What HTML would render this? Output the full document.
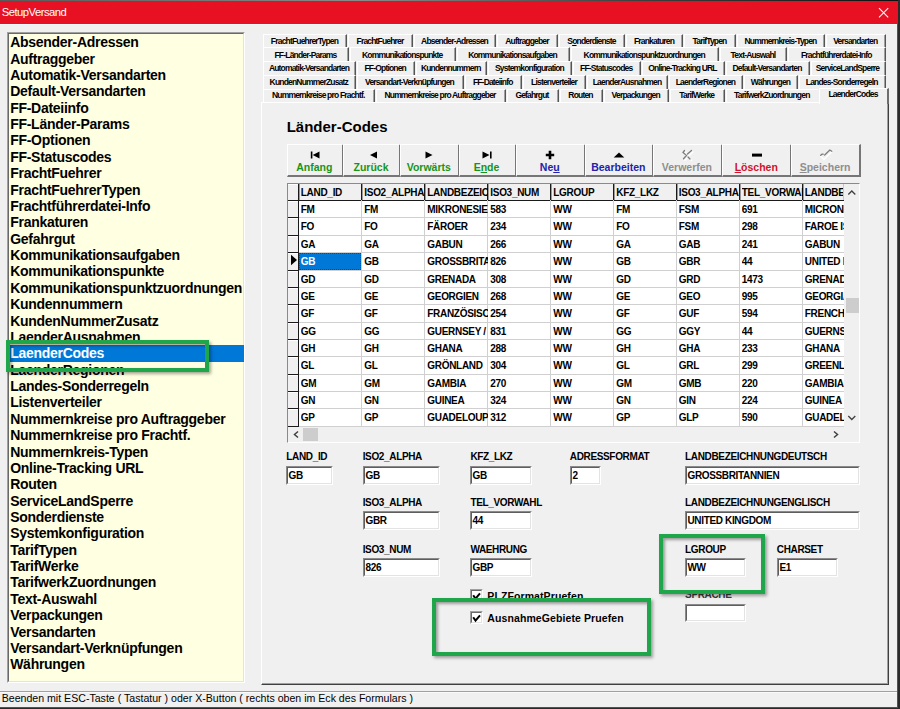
<!DOCTYPE html>
<html><head><meta charset="utf-8"><style>
html,body{margin:0;padding:0;width:900px;height:709px;overflow:hidden;background:#2a2a2a;font-family:"Liberation Sans", sans-serif}
.b{position:absolute}
.t{position:absolute;white-space:nowrap;line-height:1;font-family:"Liberation Sans", sans-serif}
.t.c{text-align:center}
.tab{position:absolute;box-sizing:border-box;background:#F0F0F0;border-top:1px solid #fff;border-left:1px solid #fff;border-right:1px solid #555;box-shadow:inset -1px 0 0 #A0A0A0;overflow:hidden}
.tab span{position:absolute;left:-1px;right:0;top:1.6px;text-align:center;font-size:8.5px;font-weight:bold;line-height:9px;letter-spacing:-0.82px;white-space:nowrap;color:#000}
.tab.act{border-right:2px solid #6E6E6E;box-shadow:none;z-index:2}
.tab.act span{top:1.5px}
.btn{position:absolute;box-sizing:border-box;background:#F0F0F0;border-top:1px solid #fff;border-left:1px solid #fff;border-right:2px solid #767676;border-bottom:2px solid #767676}
u{text-decoration:underline;text-underline-offset:1px}
</style></head><body>
<div class="b" style="left:0;top:0;width:900px;height:1px;background:linear-gradient(90deg,#5a5a5a,#8a8a8a 40%,#404040 70%,#101010)"></div>
<div class="b" style="left:0.00px;top:1.00px;width:898.00px;height:23.00px;background:#E81123"></div>
<div class="t " style="left:1.80px;top:6.63px;font-size:11.3px;font-weight:normal;color:#fff;letter-spacing:-0.55px;">SetupVersand</div>
<svg class="b" style="left:878px;top:7px" width="12" height="12" viewBox="0 0 12 12"><path d="M1 1.2L10.2 10.4M10.2 1.2L1 10.4" stroke="#fff" stroke-width="1.05"/></svg>
<div class="b" style="left:0.00px;top:24.00px;width:897.00px;height:683.00px;background:#F0F0F0"></div>
<div class="b" style="left:0.00px;top:24.00px;width:897.00px;height:1.00px;background:#F8FBFB"></div>
<div class="b" style="left:897.00px;top:1.00px;width:1.00px;height:707.00px;background:#E81123"></div>
<div class="b" style="left:0.00px;top:707.00px;width:898.00px;height:1.00px;background:#E81123"></div>
<div class="b" style="left:898.00px;top:0.00px;width:2.00px;height:709.00px;background:#2a2a2a"></div>
<div class="b" style="left:0.00px;top:708.00px;width:900.00px;height:1.00px;background:#2a2a2a"></div>
<div class="b" style="left:6.50px;top:32.00px;width:238.50px;height:651.00px;background:#FFFFE1;border-top:1px solid #A0A0A0;border-left:1px solid #A0A0A0;border-right:1px solid #fff;border-bottom:1px solid #fff;box-sizing:border-box"></div>
<div class="b" style="left:7.50px;top:33.00px;width:236.50px;height:649.00px;border-top:1px solid #696969;border-left:1px solid #696969;border-right:1px solid #E3E3E3;border-bottom:1px solid #E3E3E3;box-sizing:border-box"></div>
<div class="t " style="left:10.20px;top:35.25px;font-size:14px;font-weight:bold;color:#000;letter-spacing:-0.28px;">Absender-Adressen</div>
<div class="t " style="left:10.20px;top:51.62px;font-size:14px;font-weight:bold;color:#000;letter-spacing:-0.28px;">Auftraggeber</div>
<div class="t " style="left:10.20px;top:67.99px;font-size:14px;font-weight:bold;color:#000;letter-spacing:-0.28px;">Automatik-Versandarten</div>
<div class="t " style="left:10.20px;top:84.36px;font-size:14px;font-weight:bold;color:#000;letter-spacing:-0.28px;">Default-Versandarten</div>
<div class="t " style="left:10.20px;top:100.73px;font-size:14px;font-weight:bold;color:#000;letter-spacing:-0.28px;">FF-Dateiinfo</div>
<div class="t " style="left:10.20px;top:117.10px;font-size:14px;font-weight:bold;color:#000;letter-spacing:-0.28px;">FF-Länder-Params</div>
<div class="t " style="left:10.20px;top:133.47px;font-size:14px;font-weight:bold;color:#000;letter-spacing:-0.28px;">FF-Optionen</div>
<div class="t " style="left:10.20px;top:149.84px;font-size:14px;font-weight:bold;color:#000;letter-spacing:-0.28px;">FF-Statuscodes</div>
<div class="t " style="left:10.20px;top:166.21px;font-size:14px;font-weight:bold;color:#000;letter-spacing:-0.28px;">FrachtFuehrer</div>
<div class="t " style="left:10.20px;top:182.58px;font-size:14px;font-weight:bold;color:#000;letter-spacing:-0.28px;">FrachtFuehrerTypen</div>
<div class="t " style="left:10.20px;top:198.95px;font-size:14px;font-weight:bold;color:#000;letter-spacing:-0.28px;">Frachtführerdatei-Info</div>
<div class="t " style="left:10.20px;top:215.32px;font-size:14px;font-weight:bold;color:#000;letter-spacing:-0.28px;">Frankaturen</div>
<div class="t " style="left:10.20px;top:231.69px;font-size:14px;font-weight:bold;color:#000;letter-spacing:-0.28px;">Gefahrgut</div>
<div class="t " style="left:10.20px;top:248.06px;font-size:14px;font-weight:bold;color:#000;letter-spacing:-0.28px;">Kommunikationsaufgaben</div>
<div class="t " style="left:10.20px;top:264.43px;font-size:14px;font-weight:bold;color:#000;letter-spacing:-0.28px;">Kommunikationspunkte</div>
<div class="t " style="left:10.20px;top:280.80px;font-size:14px;font-weight:bold;color:#000;letter-spacing:-0.28px;">Kommunikationspunktzuordnungen</div>
<div class="t " style="left:10.20px;top:297.17px;font-size:14px;font-weight:bold;color:#000;letter-spacing:-0.28px;">Kundennummern</div>
<div class="t " style="left:10.20px;top:313.54px;font-size:14px;font-weight:bold;color:#000;letter-spacing:-0.28px;">KundenNummerZusatz</div>
<div class="t " style="left:10.20px;top:329.91px;font-size:14px;font-weight:bold;color:#000;letter-spacing:-0.28px;">LaenderAusnahmen</div>
<div class="b" style="left:10.00px;top:345.33px;width:233.50px;height:16.40px;background:#0078D7"></div>
<div class="t " style="left:10.20px;top:346.28px;font-size:14px;font-weight:bold;color:#fff;letter-spacing:-0.28px;">LaenderCodes</div>
<div class="t " style="left:10.20px;top:362.65px;font-size:14px;font-weight:bold;color:#000;letter-spacing:-0.28px;">LaenderRegionen</div>
<div class="t " style="left:10.20px;top:379.02px;font-size:14px;font-weight:bold;color:#000;letter-spacing:-0.28px;">Landes-Sonderregeln</div>
<div class="t " style="left:10.20px;top:395.39px;font-size:14px;font-weight:bold;color:#000;letter-spacing:-0.28px;">Listenverteiler</div>
<div class="t " style="left:10.20px;top:411.76px;font-size:14px;font-weight:bold;color:#000;letter-spacing:-0.28px;">Nummernkreise pro Auftraggeber</div>
<div class="t " style="left:10.20px;top:428.13px;font-size:14px;font-weight:bold;color:#000;letter-spacing:-0.28px;">Nummernkreise pro Frachtf.</div>
<div class="t " style="left:10.20px;top:444.50px;font-size:14px;font-weight:bold;color:#000;letter-spacing:-0.28px;">Nummernkreis-Typen</div>
<div class="t " style="left:10.20px;top:460.87px;font-size:14px;font-weight:bold;color:#000;letter-spacing:-0.28px;">Online-Tracking URL</div>
<div class="t " style="left:10.20px;top:477.24px;font-size:14px;font-weight:bold;color:#000;letter-spacing:-0.28px;">Routen</div>
<div class="t " style="left:10.20px;top:493.61px;font-size:14px;font-weight:bold;color:#000;letter-spacing:-0.28px;">ServiceLandSperre</div>
<div class="t " style="left:10.20px;top:509.98px;font-size:14px;font-weight:bold;color:#000;letter-spacing:-0.28px;">Sonderdienste</div>
<div class="t " style="left:10.20px;top:526.35px;font-size:14px;font-weight:bold;color:#000;letter-spacing:-0.28px;">Systemkonfiguration</div>
<div class="t " style="left:10.20px;top:542.72px;font-size:14px;font-weight:bold;color:#000;letter-spacing:-0.28px;">TarifTypen</div>
<div class="t " style="left:10.20px;top:559.09px;font-size:14px;font-weight:bold;color:#000;letter-spacing:-0.28px;">TarifWerke</div>
<div class="t " style="left:10.20px;top:575.46px;font-size:14px;font-weight:bold;color:#000;letter-spacing:-0.28px;">TarifwerkZuordnungen</div>
<div class="t " style="left:10.20px;top:591.83px;font-size:14px;font-weight:bold;color:#000;letter-spacing:-0.28px;">Text-Auswahl</div>
<div class="t " style="left:10.20px;top:608.20px;font-size:14px;font-weight:bold;color:#000;letter-spacing:-0.28px;">Verpackungen</div>
<div class="t " style="left:10.20px;top:624.57px;font-size:14px;font-weight:bold;color:#000;letter-spacing:-0.28px;">Versandarten</div>
<div class="t " style="left:10.20px;top:640.94px;font-size:14px;font-weight:bold;color:#000;letter-spacing:-0.28px;">Versandart-Verknüpfungen</div>
<div class="t " style="left:10.20px;top:657.31px;font-size:14px;font-weight:bold;color:#000;letter-spacing:-0.28px;">Währungen</div>
<div class="b" style="left:261.00px;top:102.00px;width:628.00px;height:582.50px;border-left:1px solid #fff;border-top:1px solid #fff;border-right:1px solid #404040;border-bottom:1px solid #404040;box-sizing:border-box;box-shadow:inset -1px -1px 0 #A0A0A0"></div>
<div class="tab" style="left:263.00px;top:34.00px;width:84.00px;height:13.50px"><span style="top:2.3px">FrachtFuehrerTypen</span></div>
<div class="tab" style="left:348.00px;top:34.00px;width:65.00px;height:13.50px"><span style="top:2.3px">FrachtFuehrer</span></div>
<div class="tab" style="left:414.00px;top:34.00px;width:82.00px;height:13.50px"><span style="top:2.3px">Absender-Adressen</span></div>
<div class="tab" style="left:497.00px;top:34.00px;width:61.00px;height:13.50px"><span style="top:2.3px">Auftraggeber</span></div>
<div class="tab" style="left:559.00px;top:34.00px;width:66.00px;height:13.50px"><span style="top:2.3px">S<u>o</u>nderdienste</span></div>
<div class="tab" style="left:626.00px;top:34.00px;width:57.00px;height:13.50px"><span style="top:2.3px">Frankaturen</span></div>
<div class="tab" style="left:684.00px;top:34.00px;width:52.00px;height:13.50px"><span style="top:2.3px">TarifTypen</span></div>
<div class="tab" style="left:737.00px;top:34.00px;width:88.00px;height:13.50px"><span style="top:2.3px">Nummernkreis-Typen</span></div>
<div class="tab" style="left:826.00px;top:34.00px;width:59.50px;height:13.50px"><span style="top:2.3px">Versandarten</span></div>
<div class="tab" style="left:263.00px;top:47.00px;width:86.00px;height:14.50px"><span style="top:3.2px">FF-Länder-Params</span></div>
<div class="tab" style="left:350.00px;top:47.00px;width:105.50px;height:14.50px"><span style="top:3.2px">Kommunikationspunkte</span></div>
<div class="tab" style="left:456.50px;top:47.00px;width:113.00px;height:14.50px"><span style="top:3.2px">Kommunikationsaufgaben</span></div>
<div class="tab" style="left:570.50px;top:47.00px;width:148.50px;height:14.50px"><span style="top:3.2px">Kommunikationspunktzuordnungen</span></div>
<div class="tab" style="left:720.00px;top:47.00px;width:67.00px;height:14.50px"><span style="top:3.2px">Text-Auswahl</span></div>
<div class="tab" style="left:788.00px;top:47.00px;width:97.50px;height:14.50px"><span style="top:3.2px">Frachtführerdatei-Info</span></div>
<div class="tab" style="left:263.00px;top:61.40px;width:93.00px;height:13.90px"><span style="top:1.6px">Automatik-Versandarten</span></div>
<div class="tab" style="left:357.00px;top:61.40px;width:57.50px;height:13.90px"><span style="top:1.6px">FF-Optionen</span></div>
<div class="tab" style="left:415.50px;top:61.40px;width:71.50px;height:13.90px"><span style="top:1.6px">Kundennummern</span></div>
<div class="tab" style="left:488.00px;top:61.40px;width:84.00px;height:13.90px"><span style="top:1.6px">Systemkonfiguration</span></div>
<div class="tab" style="left:573.00px;top:61.40px;width:67.50px;height:13.90px"><span style="top:1.6px">FF-Statuscodes</span></div>
<div class="tab" style="left:641.50px;top:61.40px;width:83.00px;height:13.90px"><span style="top:1.6px">Online-Tracking URL</span></div>
<div class="tab" style="left:725.50px;top:61.40px;width:84.00px;height:13.90px"><span style="top:1.6px">Default-Versandarten</span></div>
<div class="tab" style="left:810.50px;top:61.40px;width:75.00px;height:13.90px"><span style="top:1.6px">ServiceLandSperre</span></div>
<div class="tab" style="left:263.00px;top:75.20px;width:92.50px;height:13.90px"><span style="top:1.6px">KundenNummerZusatz</span></div>
<div class="tab" style="left:356.50px;top:75.20px;width:107.00px;height:13.90px"><span style="top:1.6px">Versandart-Verknüpfungen</span></div>
<div class="tab" style="left:464.50px;top:75.20px;width:57.50px;height:13.90px"><span style="top:1.6px">FF-Dateiinfo</span></div>
<div class="tab" style="left:523.00px;top:75.20px;width:63.00px;height:13.90px"><span style="top:1.6px">Listenverteiler</span></div>
<div class="tab" style="left:587.00px;top:75.20px;width:81.00px;height:13.90px"><span style="top:1.6px">LaenderAusnahmen</span></div>
<div class="tab" style="left:669.00px;top:75.20px;width:74.00px;height:13.90px"><span style="top:1.6px">LaenderRegionen</span></div>
<div class="tab" style="left:744.00px;top:75.20px;width:54.00px;height:13.90px"><span style="top:1.6px">Währungen</span></div>
<div class="tab" style="left:799.00px;top:75.20px;width:86.50px;height:13.90px"><span style="top:1.6px">Landes-Sonderregeln</span></div>
<div class="tab" style="left:263.00px;top:88.90px;width:111.50px;height:13.60px"><span style="top:1.6px">Nummernkreise pro Frachtf.</span></div>
<div class="tab" style="left:375.50px;top:88.90px;width:130.00px;height:13.60px"><span style="top:1.6px">Nummernkreise pro Auftraggeber</span></div>
<div class="tab" style="left:506.50px;top:88.90px;width:52.00px;height:13.60px"><span style="top:1.6px">Gefahrgut</span></div>
<div class="tab" style="left:559.50px;top:88.90px;width:43.00px;height:13.60px"><span style="top:1.6px">Routen</span></div>
<div class="tab" style="left:603.50px;top:88.90px;width:65.50px;height:13.60px"><span style="top:1.6px">Verpackungen</span></div>
<div class="tab" style="left:670.00px;top:88.90px;width:54.50px;height:13.60px"><span style="top:1.6px">TarifWerke</span></div>
<div class="tab" style="left:725.50px;top:88.90px;width:92.50px;height:13.60px;border-right:none;box-shadow:none"><span style="top:1.6px">TarifwerkZuordnungen</span></div>
<div class="tab act" style="left:819px;top:87.6px;width:70px;height:16px"><span>LaenderCodes</span></div>
<div class="t " style="left:286.70px;top:118.60px;font-size:15px;font-weight:bold;color:#000;letter-spacing:0px;">Länder-Codes</div>
<div class="btn" style="left:286.50px;top:144px;width:57.50px;height:32.5px"></div>
<svg class="b" style="left:306.75px;top:146.5px" width="16" height="16" viewBox="-8 -8 16 16"><path d="M-4.2 -3.5h1.6v7h-1.6z M4.5 -3.6 L-2.3 0 L4.5 3.6z" fill="#000"/></svg>
<div class="t c" style="left:286.00px;width:56.50px;top:162px;font-size:10.5px;font-weight:bold;color:#189418">Anfang</div>
<div class="btn" style="left:343.00px;top:144px;width:58.00px;height:32.5px"></div>
<svg class="b" style="left:363.50px;top:146.5px" width="16" height="16" viewBox="-8 -8 16 16"><path d="M5 -3.6 L-2 0 L5 3.6z" fill="#000"/></svg>
<div class="t c" style="left:342.50px;width:57.00px;top:162px;font-size:10.5px;font-weight:bold;color:#189418">Zurück</div>
<div class="btn" style="left:400.00px;top:144px;width:59.50px;height:32.5px"></div>
<svg class="b" style="left:421.25px;top:146.5px" width="16" height="16" viewBox="-8 -8 16 16"><path d="M-3.5 -3.6 L3.5 0 L-3.5 3.6z" fill="#000"/></svg>
<div class="t c" style="left:399.50px;width:58.50px;top:162px;font-size:10.5px;font-weight:bold;color:#189418">Vorwärts</div>
<div class="btn" style="left:458.50px;top:144px;width:58.00px;height:32.5px"></div>
<svg class="b" style="left:479.00px;top:146.5px" width="16" height="16" viewBox="-8 -8 16 16"><path d="M3 -3.5h1.6v7h-1.6z M-4.5 -3.6 L2.5 0 L-4.5 3.6z" fill="#000"/></svg>
<div class="t c" style="left:458.00px;width:57.00px;top:162px;font-size:10.5px;font-weight:bold;color:#189418">E<u>n</u>de</div>
<div class="btn" style="left:515.50px;top:144px;width:70.50px;height:32.5px"></div>
<svg class="b" style="left:542.25px;top:146.5px" width="16" height="16" viewBox="-8 -8 16 16"><path d="M-1.3 -4.2h2.6v2.9h2.9v2.6h-2.9v2.9h-2.6v-2.9h-2.9v-2.6h2.9z" fill="#000"/></svg>
<div class="t c" style="left:515.00px;width:69.50px;top:162px;font-size:10.5px;font-weight:bold;color:#2222AA">Ne<u>u</u></div>
<div class="btn" style="left:585.00px;top:144px;width:68.60px;height:32.5px"></div>
<svg class="b" style="left:610.80px;top:146.5px" width="16" height="16" viewBox="-8 -8 16 16"><path d="M-5.3 2.6 L0 -2.6 L5.3 2.6z" fill="#000"/></svg>
<div class="t c" style="left:584.50px;width:67.60px;top:162px;font-size:10.5px;font-weight:bold;color:#2222AA">Bearbeiten</div>
<div class="btn" style="left:652.60px;top:144px;width:70.70px;height:32.5px"></div>
<svg class="b" style="left:679.45px;top:146.5px" width="16" height="16" viewBox="-8 -8 16 16"><g fill="none" stroke-width="1.3" stroke-linecap="round"><path d="M-2 -4 L-3.5 -2 L0 1 L-3 4.3 M5 -4 L1 -0.5 M1.5 2.5 L3.5 4.5" stroke="#fff" transform="translate(1,1)"/><path d="M-2.5 -4.5 L-4 -2.5 L-0.5 0.5 L-3.5 3.8 M4.5 -4.5 L0.5 -1 M1 2 L3 4" stroke="#7C7C7C"/></g></svg>
<div class="t c" style="left:652.10px;width:69.70px;top:162px;font-size:10.5px;font-weight:bold;color:#8E8E8E">Verwerfen</div>
<div class="btn" style="left:722.30px;top:144px;width:69.90px;height:32.5px"></div>
<svg class="b" style="left:748.75px;top:146.5px" width="16" height="16" viewBox="-8 -8 16 16"><path d="M-5 -1.4h10v3h-10z" fill="#000"/></svg>
<div class="t c" style="left:721.80px;width:68.90px;top:162px;font-size:10.5px;font-weight:bold;color:#D0122A"><u>L</u>öschen</div>
<div class="btn" style="left:791.20px;top:144px;width:69.80px;height:32.5px"></div>
<svg class="b" style="left:817.60px;top:146.5px" width="16" height="16" viewBox="-8 -8 16 16"><g fill="none" stroke-width="1.3" stroke-linecap="round"><path d="M-5 1.5 L-2 4.5 L5.5 -3" stroke="#fff"/><path d="M-5.3 0.3 L-4 -0.8 L-2.8 -0.8 M-1.3 0 L3.8 -5 L5.8 -3.8" stroke="#7C7C7C"/></g></svg>
<div class="t c" style="left:790.70px;width:68.80px;top:162px;font-size:10.5px;font-weight:bold;color:#8E8E8E"><u>S</u>peichern</div>
<div class="b" style="left:286.50px;top:182.60px;width:573.50px;height:260.40px;background:#F0F0F0;border-top:1px solid #8A8A8A;border-left:1px solid #8A8A8A;border-right:1px solid #fff;border-bottom:1px solid #fff;box-sizing:border-box"></div>
<div class="b" style="left:287.50px;top:183.60px;width:571.50px;height:258.40px;border-top:1px solid #505050;border-left:1px solid #505050;box-sizing:border-box"></div>
<div class="b" style="left:288px;top:184px;width:555.50px;height:243px;overflow:hidden;background:#fff">
<div class="b" style="left:0;top:0;width:600px;height:16px;background:#F0F0F0"></div>
<div class="b" style="left:0;top:0px;width:10px;height:16px;background:#F0F0F0;border-top:1px solid #fff;box-sizing:border-box"></div>
<div class="b" style="left:0;top:16px;width:10px;height:1px;background:#1a1a1a"></div>
<div class="b" style="left:0;top:17px;width:10px;height:1px;background:#8a8a8a"></div>
<div class="b" style="left:0;top:17px;width:10px;height:16px;background:#F0F0F0;border-top:1px solid #fff;box-sizing:border-box"></div>
<div class="b" style="left:0;top:33px;width:10px;height:1px;background:#1a1a1a"></div>
<div class="b" style="left:0;top:34px;width:10px;height:1px;background:#8a8a8a"></div>
<div class="b" style="left:0;top:34px;width:10px;height:17px;background:#F0F0F0;border-top:1px solid #fff;box-sizing:border-box"></div>
<div class="b" style="left:0;top:51px;width:10px;height:1px;background:#1a1a1a"></div>
<div class="b" style="left:0;top:52px;width:10px;height:1px;background:#8a8a8a"></div>
<div class="b" style="left:0;top:52px;width:10px;height:16px;background:#F0F0F0;border-top:1px solid #fff;box-sizing:border-box"></div>
<div class="b" style="left:0;top:68px;width:10px;height:1px;background:#1a1a1a"></div>
<div class="b" style="left:0;top:69px;width:10px;height:1px;background:#8a8a8a"></div>
<div class="b" style="left:0;top:69px;width:10px;height:17px;background:#F0F0F0;border-top:1px solid #fff;box-sizing:border-box"></div>
<div class="b" style="left:0;top:86px;width:10px;height:1px;background:#1a1a1a"></div>
<div class="b" style="left:0;top:87px;width:10px;height:1px;background:#8a8a8a"></div>
<div class="b" style="left:0;top:87px;width:10px;height:16px;background:#F0F0F0;border-top:1px solid #fff;box-sizing:border-box"></div>
<div class="b" style="left:0;top:103px;width:10px;height:1px;background:#1a1a1a"></div>
<div class="b" style="left:0;top:104px;width:10px;height:1px;background:#8a8a8a"></div>
<div class="b" style="left:0;top:104px;width:10px;height:16px;background:#F0F0F0;border-top:1px solid #fff;box-sizing:border-box"></div>
<div class="b" style="left:0;top:120px;width:10px;height:1px;background:#1a1a1a"></div>
<div class="b" style="left:0;top:121px;width:10px;height:1px;background:#8a8a8a"></div>
<div class="b" style="left:0;top:121px;width:10px;height:17px;background:#F0F0F0;border-top:1px solid #fff;box-sizing:border-box"></div>
<div class="b" style="left:0;top:138px;width:10px;height:1px;background:#1a1a1a"></div>
<div class="b" style="left:0;top:139px;width:10px;height:1px;background:#8a8a8a"></div>
<div class="b" style="left:0;top:139px;width:10px;height:16px;background:#F0F0F0;border-top:1px solid #fff;box-sizing:border-box"></div>
<div class="b" style="left:0;top:155px;width:10px;height:1px;background:#1a1a1a"></div>
<div class="b" style="left:0;top:156px;width:10px;height:1px;background:#8a8a8a"></div>
<div class="b" style="left:0;top:156px;width:10px;height:16px;background:#F0F0F0;border-top:1px solid #fff;box-sizing:border-box"></div>
<div class="b" style="left:0;top:172px;width:10px;height:1px;background:#1a1a1a"></div>
<div class="b" style="left:0;top:173px;width:10px;height:1px;background:#8a8a8a"></div>
<div class="b" style="left:0;top:173px;width:10px;height:17px;background:#F0F0F0;border-top:1px solid #fff;box-sizing:border-box"></div>
<div class="b" style="left:0;top:190px;width:10px;height:1px;background:#1a1a1a"></div>
<div class="b" style="left:0;top:191px;width:10px;height:1px;background:#8a8a8a"></div>
<div class="b" style="left:0;top:191px;width:10px;height:16px;background:#F0F0F0;border-top:1px solid #fff;box-sizing:border-box"></div>
<div class="b" style="left:0;top:207px;width:10px;height:1px;background:#1a1a1a"></div>
<div class="b" style="left:0;top:208px;width:10px;height:1px;background:#8a8a8a"></div>
<div class="b" style="left:0;top:208px;width:10px;height:16px;background:#F0F0F0;border-top:1px solid #fff;box-sizing:border-box"></div>
<div class="b" style="left:0;top:224px;width:10px;height:1px;background:#1a1a1a"></div>
<div class="b" style="left:0;top:225px;width:10px;height:1px;background:#8a8a8a"></div>
<div class="b" style="left:0;top:225px;width:10px;height:17px;background:#F0F0F0;border-top:1px solid #fff;box-sizing:border-box"></div>
<div class="b" style="left:0;top:242px;width:10px;height:1px;background:#1a1a1a"></div>
<div class="b" style="left:0;top:243px;width:10px;height:1px;background:#8a8a8a"></div>
<svg class="b" style="left:1px;top:70px" width="10" height="12" viewBox="0 0 10 12"><path d="M2 0.8 L8 6 L2 11.2z" fill="#000"/></svg>
<div class="b" style="left:10px;top:16px;width:600px;height:1px;background:#1a1a1a"></div>
<div class="b" style="left:10px;top:0;width:1px;height:16px;background:#1a1a1a"></div>
<div class="b" style="left:11px;top:0;width:1px;height:16px;background:#9a9a9a"></div>
<div class="b" style="left:10px;top:16px;width:1px;height:300px;background:#1a1a1a"></div>
<div class="b" style="left:73px;top:0;width:1px;height:16px;background:#1a1a1a"></div>
<div class="b" style="left:74px;top:0;width:1px;height:16px;background:#9a9a9a"></div>
<div class="b" style="left:73px;top:16px;width:1px;height:300px;background:#D0D0D0"></div>
<div class="b" style="left:136px;top:0;width:1px;height:16px;background:#1a1a1a"></div>
<div class="b" style="left:137px;top:0;width:1px;height:16px;background:#9a9a9a"></div>
<div class="b" style="left:136px;top:16px;width:1px;height:300px;background:#D0D0D0"></div>
<div class="b" style="left:199px;top:0;width:1px;height:16px;background:#1a1a1a"></div>
<div class="b" style="left:200px;top:0;width:1px;height:16px;background:#9a9a9a"></div>
<div class="b" style="left:199px;top:16px;width:1px;height:300px;background:#D0D0D0"></div>
<div class="b" style="left:262px;top:0;width:1px;height:16px;background:#1a1a1a"></div>
<div class="b" style="left:263px;top:0;width:1px;height:16px;background:#9a9a9a"></div>
<div class="b" style="left:262px;top:16px;width:1px;height:300px;background:#D0D0D0"></div>
<div class="b" style="left:325px;top:0;width:1px;height:16px;background:#1a1a1a"></div>
<div class="b" style="left:326px;top:0;width:1px;height:16px;background:#9a9a9a"></div>
<div class="b" style="left:325px;top:16px;width:1px;height:300px;background:#D0D0D0"></div>
<div class="b" style="left:388px;top:0;width:1px;height:16px;background:#1a1a1a"></div>
<div class="b" style="left:389px;top:0;width:1px;height:16px;background:#9a9a9a"></div>
<div class="b" style="left:388px;top:16px;width:1px;height:300px;background:#D0D0D0"></div>
<div class="b" style="left:451px;top:0;width:1px;height:16px;background:#1a1a1a"></div>
<div class="b" style="left:452px;top:0;width:1px;height:16px;background:#9a9a9a"></div>
<div class="b" style="left:451px;top:16px;width:1px;height:300px;background:#D0D0D0"></div>
<div class="b" style="left:514px;top:0;width:1px;height:16px;background:#1a1a1a"></div>
<div class="b" style="left:515px;top:0;width:1px;height:16px;background:#9a9a9a"></div>
<div class="b" style="left:514px;top:16px;width:1px;height:300px;background:#D0D0D0"></div>
<div class="b" style="left:577px;top:0;width:1px;height:16px;background:#1a1a1a"></div>
<div class="b" style="left:578px;top:0;width:1px;height:16px;background:#9a9a9a"></div>
<div class="b" style="left:577px;top:16px;width:1px;height:300px;background:#D0D0D0"></div>
<div class="b" style="left:11px;top:33px;width:600px;height:1px;background:#D0D0D0"></div>
<div class="b" style="left:11px;top:51px;width:600px;height:1px;background:#D0D0D0"></div>
<div class="b" style="left:11px;top:68px;width:600px;height:1px;background:#D0D0D0"></div>
<div class="b" style="left:11px;top:86px;width:600px;height:1px;background:#D0D0D0"></div>
<div class="b" style="left:11px;top:103px;width:600px;height:1px;background:#D0D0D0"></div>
<div class="b" style="left:11px;top:120px;width:600px;height:1px;background:#D0D0D0"></div>
<div class="b" style="left:11px;top:138px;width:600px;height:1px;background:#D0D0D0"></div>
<div class="b" style="left:11px;top:155px;width:600px;height:1px;background:#D0D0D0"></div>
<div class="b" style="left:11px;top:172px;width:600px;height:1px;background:#D0D0D0"></div>
<div class="b" style="left:11px;top:190px;width:600px;height:1px;background:#D0D0D0"></div>
<div class="b" style="left:11px;top:207px;width:600px;height:1px;background:#D0D0D0"></div>
<div class="b" style="left:11px;top:224px;width:600px;height:1px;background:#D0D0D0"></div>
<div class="b" style="left:11px;top:242px;width:600px;height:1px;background:#D0D0D0"></div>
<div class="b" style="left:11px;top:69px;width:62px;height:17px;background:#0078D7;outline:1px dotted #5a3a10;outline-offset:-1px"></div>
<div class="t" style="left:12.80px;top:4px;font-size:10px;font-weight:bold;color:#000;letter-spacing:-0.3px;width:61px;overflow:hidden;padding-top:4px;margin-top:-4px">LAND_ID</div>
<div class="t" style="left:76.30px;top:4px;font-size:10px;font-weight:bold;color:#000;letter-spacing:-0.3px;width:61px;overflow:hidden;padding-top:4px;margin-top:-4px">ISO2_ALPHA</div>
<div class="t" style="left:139.30px;top:4px;font-size:10px;font-weight:bold;color:#000;letter-spacing:-0.3px;width:61px;overflow:hidden;padding-top:4px;margin-top:-4px">LANDBEZEICHNUNGDEUTSCH</div>
<div class="t" style="left:202.30px;top:4px;font-size:10px;font-weight:bold;color:#000;letter-spacing:-0.3px;width:61px;overflow:hidden;padding-top:4px;margin-top:-4px">ISO3_NUM</div>
<div class="t" style="left:265.30px;top:4px;font-size:10px;font-weight:bold;color:#000;letter-spacing:-0.3px;width:61px;overflow:hidden;padding-top:4px;margin-top:-4px">LGROUP</div>
<div class="t" style="left:328.30px;top:4px;font-size:10px;font-weight:bold;color:#000;letter-spacing:-0.3px;width:61px;overflow:hidden;padding-top:4px;margin-top:-4px">KFZ_LKZ</div>
<div class="t" style="left:390.80px;top:4px;font-size:10px;font-weight:bold;color:#000;letter-spacing:-0.3px;width:61px;overflow:hidden;padding-top:4px;margin-top:-4px">ISO3_ALPHA</div>
<div class="t" style="left:453.80px;top:4px;font-size:10px;font-weight:bold;color:#000;letter-spacing:-0.3px;width:61px;overflow:hidden;padding-top:4px;margin-top:-4px">TEL_VORWAHL</div>
<div class="t" style="left:516.80px;top:4px;font-size:10px;font-weight:bold;color:#000;letter-spacing:-0.3px;width:61px;overflow:hidden;padding-top:4px;margin-top:-4px">LANDBEZEICHNUNGENGLISCH</div>
<div class="t" style="left:12.80px;top:21px;font-size:10px;font-weight:bold;color:#000;letter-spacing:-0.3px;width:61px;overflow:hidden;padding-top:4px;margin-top:-4px">FM</div>
<div class="t" style="left:76.30px;top:21px;font-size:10px;font-weight:bold;color:#000;letter-spacing:-0.3px;width:61px;overflow:hidden;padding-top:4px;margin-top:-4px">FM</div>
<div class="t" style="left:139.30px;top:21px;font-size:10px;font-weight:bold;color:#000;letter-spacing:-0.3px;width:61px;overflow:hidden;padding-top:4px;margin-top:-4px">MIKRONESIEN</div>
<div class="t" style="left:202.30px;top:21px;font-size:10px;font-weight:bold;color:#000;letter-spacing:-0.3px;width:61px;overflow:hidden;padding-top:4px;margin-top:-4px">583</div>
<div class="t" style="left:265.30px;top:21px;font-size:10px;font-weight:bold;color:#000;letter-spacing:-0.3px;width:61px;overflow:hidden;padding-top:4px;margin-top:-4px">WW</div>
<div class="t" style="left:328.30px;top:21px;font-size:10px;font-weight:bold;color:#000;letter-spacing:-0.3px;width:61px;overflow:hidden;padding-top:4px;margin-top:-4px">FM</div>
<div class="t" style="left:390.80px;top:21px;font-size:10px;font-weight:bold;color:#000;letter-spacing:-0.3px;width:61px;overflow:hidden;padding-top:4px;margin-top:-4px">FSM</div>
<div class="t" style="left:453.80px;top:21px;font-size:10px;font-weight:bold;color:#000;letter-spacing:-0.3px;width:61px;overflow:hidden;padding-top:4px;margin-top:-4px">691</div>
<div class="t" style="left:516.80px;top:21px;font-size:10px;font-weight:bold;color:#000;letter-spacing:-0.3px;width:61px;overflow:hidden;padding-top:4px;margin-top:-4px">MICRONESIA</div>
<div class="t" style="left:12.80px;top:38px;font-size:10px;font-weight:bold;color:#000;letter-spacing:-0.3px;width:61px;overflow:hidden;padding-top:4px;margin-top:-4px">FO</div>
<div class="t" style="left:76.30px;top:38px;font-size:10px;font-weight:bold;color:#000;letter-spacing:-0.3px;width:61px;overflow:hidden;padding-top:4px;margin-top:-4px">FO</div>
<div class="t" style="left:139.30px;top:38px;font-size:10px;font-weight:bold;color:#000;letter-spacing:-0.3px;width:61px;overflow:hidden;padding-top:4px;margin-top:-4px">FÄROER</div>
<div class="t" style="left:202.30px;top:38px;font-size:10px;font-weight:bold;color:#000;letter-spacing:-0.3px;width:61px;overflow:hidden;padding-top:4px;margin-top:-4px">234</div>
<div class="t" style="left:265.30px;top:38px;font-size:10px;font-weight:bold;color:#000;letter-spacing:-0.3px;width:61px;overflow:hidden;padding-top:4px;margin-top:-4px">WW</div>
<div class="t" style="left:328.30px;top:38px;font-size:10px;font-weight:bold;color:#000;letter-spacing:-0.3px;width:61px;overflow:hidden;padding-top:4px;margin-top:-4px">FO</div>
<div class="t" style="left:390.80px;top:38px;font-size:10px;font-weight:bold;color:#000;letter-spacing:-0.3px;width:61px;overflow:hidden;padding-top:4px;margin-top:-4px">FSM</div>
<div class="t" style="left:453.80px;top:38px;font-size:10px;font-weight:bold;color:#000;letter-spacing:-0.3px;width:61px;overflow:hidden;padding-top:4px;margin-top:-4px">298</div>
<div class="t" style="left:516.80px;top:38px;font-size:10px;font-weight:bold;color:#000;letter-spacing:-0.3px;width:61px;overflow:hidden;padding-top:4px;margin-top:-4px">FAROE ISLANDS</div>
<div class="t" style="left:12.80px;top:56px;font-size:10px;font-weight:bold;color:#000;letter-spacing:-0.3px;width:61px;overflow:hidden;padding-top:4px;margin-top:-4px">GA</div>
<div class="t" style="left:76.30px;top:56px;font-size:10px;font-weight:bold;color:#000;letter-spacing:-0.3px;width:61px;overflow:hidden;padding-top:4px;margin-top:-4px">GA</div>
<div class="t" style="left:139.30px;top:56px;font-size:10px;font-weight:bold;color:#000;letter-spacing:-0.3px;width:61px;overflow:hidden;padding-top:4px;margin-top:-4px">GABUN</div>
<div class="t" style="left:202.30px;top:56px;font-size:10px;font-weight:bold;color:#000;letter-spacing:-0.3px;width:61px;overflow:hidden;padding-top:4px;margin-top:-4px">266</div>
<div class="t" style="left:265.30px;top:56px;font-size:10px;font-weight:bold;color:#000;letter-spacing:-0.3px;width:61px;overflow:hidden;padding-top:4px;margin-top:-4px">WW</div>
<div class="t" style="left:328.30px;top:56px;font-size:10px;font-weight:bold;color:#000;letter-spacing:-0.3px;width:61px;overflow:hidden;padding-top:4px;margin-top:-4px">GA</div>
<div class="t" style="left:390.80px;top:56px;font-size:10px;font-weight:bold;color:#000;letter-spacing:-0.3px;width:61px;overflow:hidden;padding-top:4px;margin-top:-4px">GAB</div>
<div class="t" style="left:453.80px;top:56px;font-size:10px;font-weight:bold;color:#000;letter-spacing:-0.3px;width:61px;overflow:hidden;padding-top:4px;margin-top:-4px">241</div>
<div class="t" style="left:516.80px;top:56px;font-size:10px;font-weight:bold;color:#000;letter-spacing:-0.3px;width:61px;overflow:hidden;padding-top:4px;margin-top:-4px">GABUN</div>
<div class="t" style="left:12.80px;top:73px;font-size:10px;font-weight:bold;color:#fff;letter-spacing:-0.3px;width:61px;overflow:hidden;padding-top:4px;margin-top:-4px">GB</div>
<div class="t" style="left:76.30px;top:73px;font-size:10px;font-weight:bold;color:#000;letter-spacing:-0.3px;width:61px;overflow:hidden;padding-top:4px;margin-top:-4px">GB</div>
<div class="t" style="left:139.30px;top:73px;font-size:10px;font-weight:bold;color:#000;letter-spacing:-0.3px;width:61px;overflow:hidden;padding-top:4px;margin-top:-4px">GROSSBRITANNIEN</div>
<div class="t" style="left:202.30px;top:73px;font-size:10px;font-weight:bold;color:#000;letter-spacing:-0.3px;width:61px;overflow:hidden;padding-top:4px;margin-top:-4px">826</div>
<div class="t" style="left:265.30px;top:73px;font-size:10px;font-weight:bold;color:#000;letter-spacing:-0.3px;width:61px;overflow:hidden;padding-top:4px;margin-top:-4px">WW</div>
<div class="t" style="left:328.30px;top:73px;font-size:10px;font-weight:bold;color:#000;letter-spacing:-0.3px;width:61px;overflow:hidden;padding-top:4px;margin-top:-4px">GB</div>
<div class="t" style="left:390.80px;top:73px;font-size:10px;font-weight:bold;color:#000;letter-spacing:-0.3px;width:61px;overflow:hidden;padding-top:4px;margin-top:-4px">GBR</div>
<div class="t" style="left:453.80px;top:73px;font-size:10px;font-weight:bold;color:#000;letter-spacing:-0.3px;width:61px;overflow:hidden;padding-top:4px;margin-top:-4px">44</div>
<div class="t" style="left:516.80px;top:73px;font-size:10px;font-weight:bold;color:#000;letter-spacing:-0.3px;width:61px;overflow:hidden;padding-top:4px;margin-top:-4px">UNITED KINGDOM</div>
<div class="t" style="left:12.80px;top:91px;font-size:10px;font-weight:bold;color:#000;letter-spacing:-0.3px;width:61px;overflow:hidden;padding-top:4px;margin-top:-4px">GD</div>
<div class="t" style="left:76.30px;top:91px;font-size:10px;font-weight:bold;color:#000;letter-spacing:-0.3px;width:61px;overflow:hidden;padding-top:4px;margin-top:-4px">GD</div>
<div class="t" style="left:139.30px;top:91px;font-size:10px;font-weight:bold;color:#000;letter-spacing:-0.3px;width:61px;overflow:hidden;padding-top:4px;margin-top:-4px">GRENADA</div>
<div class="t" style="left:202.30px;top:91px;font-size:10px;font-weight:bold;color:#000;letter-spacing:-0.3px;width:61px;overflow:hidden;padding-top:4px;margin-top:-4px">308</div>
<div class="t" style="left:265.30px;top:91px;font-size:10px;font-weight:bold;color:#000;letter-spacing:-0.3px;width:61px;overflow:hidden;padding-top:4px;margin-top:-4px">WW</div>
<div class="t" style="left:328.30px;top:91px;font-size:10px;font-weight:bold;color:#000;letter-spacing:-0.3px;width:61px;overflow:hidden;padding-top:4px;margin-top:-4px">GD</div>
<div class="t" style="left:390.80px;top:91px;font-size:10px;font-weight:bold;color:#000;letter-spacing:-0.3px;width:61px;overflow:hidden;padding-top:4px;margin-top:-4px">GRD</div>
<div class="t" style="left:453.80px;top:91px;font-size:10px;font-weight:bold;color:#000;letter-spacing:-0.3px;width:61px;overflow:hidden;padding-top:4px;margin-top:-4px">1473</div>
<div class="t" style="left:516.80px;top:91px;font-size:10px;font-weight:bold;color:#000;letter-spacing:-0.3px;width:61px;overflow:hidden;padding-top:4px;margin-top:-4px">GRENADA</div>
<div class="t" style="left:12.80px;top:108px;font-size:10px;font-weight:bold;color:#000;letter-spacing:-0.3px;width:61px;overflow:hidden;padding-top:4px;margin-top:-4px">GE</div>
<div class="t" style="left:76.30px;top:108px;font-size:10px;font-weight:bold;color:#000;letter-spacing:-0.3px;width:61px;overflow:hidden;padding-top:4px;margin-top:-4px">GE</div>
<div class="t" style="left:139.30px;top:108px;font-size:10px;font-weight:bold;color:#000;letter-spacing:-0.3px;width:61px;overflow:hidden;padding-top:4px;margin-top:-4px">GEORGIEN</div>
<div class="t" style="left:202.30px;top:108px;font-size:10px;font-weight:bold;color:#000;letter-spacing:-0.3px;width:61px;overflow:hidden;padding-top:4px;margin-top:-4px">268</div>
<div class="t" style="left:265.30px;top:108px;font-size:10px;font-weight:bold;color:#000;letter-spacing:-0.3px;width:61px;overflow:hidden;padding-top:4px;margin-top:-4px">WW</div>
<div class="t" style="left:328.30px;top:108px;font-size:10px;font-weight:bold;color:#000;letter-spacing:-0.3px;width:61px;overflow:hidden;padding-top:4px;margin-top:-4px">GE</div>
<div class="t" style="left:390.80px;top:108px;font-size:10px;font-weight:bold;color:#000;letter-spacing:-0.3px;width:61px;overflow:hidden;padding-top:4px;margin-top:-4px">GEO</div>
<div class="t" style="left:453.80px;top:108px;font-size:10px;font-weight:bold;color:#000;letter-spacing:-0.3px;width:61px;overflow:hidden;padding-top:4px;margin-top:-4px">995</div>
<div class="t" style="left:516.80px;top:108px;font-size:10px;font-weight:bold;color:#000;letter-spacing:-0.3px;width:61px;overflow:hidden;padding-top:4px;margin-top:-4px">GEORGIA</div>
<div class="t" style="left:12.80px;top:125px;font-size:10px;font-weight:bold;color:#000;letter-spacing:-0.3px;width:61px;overflow:hidden;padding-top:4px;margin-top:-4px">GF</div>
<div class="t" style="left:76.30px;top:125px;font-size:10px;font-weight:bold;color:#000;letter-spacing:-0.3px;width:61px;overflow:hidden;padding-top:4px;margin-top:-4px">GF</div>
<div class="t" style="left:139.30px;top:125px;font-size:10px;font-weight:bold;color:#000;letter-spacing:-0.3px;width:61px;overflow:hidden;padding-top:4px;margin-top:-4px">FRANZÖSISCH-GUAYANA</div>
<div class="t" style="left:202.30px;top:125px;font-size:10px;font-weight:bold;color:#000;letter-spacing:-0.3px;width:61px;overflow:hidden;padding-top:4px;margin-top:-4px">254</div>
<div class="t" style="left:265.30px;top:125px;font-size:10px;font-weight:bold;color:#000;letter-spacing:-0.3px;width:61px;overflow:hidden;padding-top:4px;margin-top:-4px">WW</div>
<div class="t" style="left:328.30px;top:125px;font-size:10px;font-weight:bold;color:#000;letter-spacing:-0.3px;width:61px;overflow:hidden;padding-top:4px;margin-top:-4px">GF</div>
<div class="t" style="left:390.80px;top:125px;font-size:10px;font-weight:bold;color:#000;letter-spacing:-0.3px;width:61px;overflow:hidden;padding-top:4px;margin-top:-4px">GUF</div>
<div class="t" style="left:453.80px;top:125px;font-size:10px;font-weight:bold;color:#000;letter-spacing:-0.3px;width:61px;overflow:hidden;padding-top:4px;margin-top:-4px">594</div>
<div class="t" style="left:516.80px;top:125px;font-size:10px;font-weight:bold;color:#000;letter-spacing:-0.3px;width:61px;overflow:hidden;padding-top:4px;margin-top:-4px">FRENCH GUIANA</div>
<div class="t" style="left:12.80px;top:143px;font-size:10px;font-weight:bold;color:#000;letter-spacing:-0.3px;width:61px;overflow:hidden;padding-top:4px;margin-top:-4px">GG</div>
<div class="t" style="left:76.30px;top:143px;font-size:10px;font-weight:bold;color:#000;letter-spacing:-0.3px;width:61px;overflow:hidden;padding-top:4px;margin-top:-4px">GG</div>
<div class="t" style="left:139.30px;top:143px;font-size:10px;font-weight:bold;color:#000;letter-spacing:-0.3px;width:61px;overflow:hidden;padding-top:4px;margin-top:-4px">GUERNSEY / CHANNEL</div>
<div class="t" style="left:202.30px;top:143px;font-size:10px;font-weight:bold;color:#000;letter-spacing:-0.3px;width:61px;overflow:hidden;padding-top:4px;margin-top:-4px">831</div>
<div class="t" style="left:265.30px;top:143px;font-size:10px;font-weight:bold;color:#000;letter-spacing:-0.3px;width:61px;overflow:hidden;padding-top:4px;margin-top:-4px">WW</div>
<div class="t" style="left:328.30px;top:143px;font-size:10px;font-weight:bold;color:#000;letter-spacing:-0.3px;width:61px;overflow:hidden;padding-top:4px;margin-top:-4px">GG</div>
<div class="t" style="left:390.80px;top:143px;font-size:10px;font-weight:bold;color:#000;letter-spacing:-0.3px;width:61px;overflow:hidden;padding-top:4px;margin-top:-4px">GGY</div>
<div class="t" style="left:453.80px;top:143px;font-size:10px;font-weight:bold;color:#000;letter-spacing:-0.3px;width:61px;overflow:hidden;padding-top:4px;margin-top:-4px">44</div>
<div class="t" style="left:516.80px;top:143px;font-size:10px;font-weight:bold;color:#000;letter-spacing:-0.3px;width:61px;overflow:hidden;padding-top:4px;margin-top:-4px">GUERNSEY</div>
<div class="t" style="left:12.80px;top:160px;font-size:10px;font-weight:bold;color:#000;letter-spacing:-0.3px;width:61px;overflow:hidden;padding-top:4px;margin-top:-4px">GH</div>
<div class="t" style="left:76.30px;top:160px;font-size:10px;font-weight:bold;color:#000;letter-spacing:-0.3px;width:61px;overflow:hidden;padding-top:4px;margin-top:-4px">GH</div>
<div class="t" style="left:139.30px;top:160px;font-size:10px;font-weight:bold;color:#000;letter-spacing:-0.3px;width:61px;overflow:hidden;padding-top:4px;margin-top:-4px">GHANA</div>
<div class="t" style="left:202.30px;top:160px;font-size:10px;font-weight:bold;color:#000;letter-spacing:-0.3px;width:61px;overflow:hidden;padding-top:4px;margin-top:-4px">288</div>
<div class="t" style="left:265.30px;top:160px;font-size:10px;font-weight:bold;color:#000;letter-spacing:-0.3px;width:61px;overflow:hidden;padding-top:4px;margin-top:-4px">WW</div>
<div class="t" style="left:328.30px;top:160px;font-size:10px;font-weight:bold;color:#000;letter-spacing:-0.3px;width:61px;overflow:hidden;padding-top:4px;margin-top:-4px">GH</div>
<div class="t" style="left:390.80px;top:160px;font-size:10px;font-weight:bold;color:#000;letter-spacing:-0.3px;width:61px;overflow:hidden;padding-top:4px;margin-top:-4px">GHA</div>
<div class="t" style="left:453.80px;top:160px;font-size:10px;font-weight:bold;color:#000;letter-spacing:-0.3px;width:61px;overflow:hidden;padding-top:4px;margin-top:-4px">233</div>
<div class="t" style="left:516.80px;top:160px;font-size:10px;font-weight:bold;color:#000;letter-spacing:-0.3px;width:61px;overflow:hidden;padding-top:4px;margin-top:-4px">GHANA</div>
<div class="t" style="left:12.80px;top:177px;font-size:10px;font-weight:bold;color:#000;letter-spacing:-0.3px;width:61px;overflow:hidden;padding-top:4px;margin-top:-4px">GL</div>
<div class="t" style="left:76.30px;top:177px;font-size:10px;font-weight:bold;color:#000;letter-spacing:-0.3px;width:61px;overflow:hidden;padding-top:4px;margin-top:-4px">GL</div>
<div class="t" style="left:139.30px;top:177px;font-size:10px;font-weight:bold;color:#000;letter-spacing:-0.3px;width:61px;overflow:hidden;padding-top:4px;margin-top:-4px">GRÖNLAND</div>
<div class="t" style="left:202.30px;top:177px;font-size:10px;font-weight:bold;color:#000;letter-spacing:-0.3px;width:61px;overflow:hidden;padding-top:4px;margin-top:-4px">304</div>
<div class="t" style="left:265.30px;top:177px;font-size:10px;font-weight:bold;color:#000;letter-spacing:-0.3px;width:61px;overflow:hidden;padding-top:4px;margin-top:-4px">WW</div>
<div class="t" style="left:328.30px;top:177px;font-size:10px;font-weight:bold;color:#000;letter-spacing:-0.3px;width:61px;overflow:hidden;padding-top:4px;margin-top:-4px">GL</div>
<div class="t" style="left:390.80px;top:177px;font-size:10px;font-weight:bold;color:#000;letter-spacing:-0.3px;width:61px;overflow:hidden;padding-top:4px;margin-top:-4px">GRL</div>
<div class="t" style="left:453.80px;top:177px;font-size:10px;font-weight:bold;color:#000;letter-spacing:-0.3px;width:61px;overflow:hidden;padding-top:4px;margin-top:-4px">299</div>
<div class="t" style="left:516.80px;top:177px;font-size:10px;font-weight:bold;color:#000;letter-spacing:-0.3px;width:61px;overflow:hidden;padding-top:4px;margin-top:-4px">GREENLAND</div>
<div class="t" style="left:12.80px;top:195px;font-size:10px;font-weight:bold;color:#000;letter-spacing:-0.3px;width:61px;overflow:hidden;padding-top:4px;margin-top:-4px">GM</div>
<div class="t" style="left:76.30px;top:195px;font-size:10px;font-weight:bold;color:#000;letter-spacing:-0.3px;width:61px;overflow:hidden;padding-top:4px;margin-top:-4px">GM</div>
<div class="t" style="left:139.30px;top:195px;font-size:10px;font-weight:bold;color:#000;letter-spacing:-0.3px;width:61px;overflow:hidden;padding-top:4px;margin-top:-4px">GAMBIA</div>
<div class="t" style="left:202.30px;top:195px;font-size:10px;font-weight:bold;color:#000;letter-spacing:-0.3px;width:61px;overflow:hidden;padding-top:4px;margin-top:-4px">270</div>
<div class="t" style="left:265.30px;top:195px;font-size:10px;font-weight:bold;color:#000;letter-spacing:-0.3px;width:61px;overflow:hidden;padding-top:4px;margin-top:-4px">WW</div>
<div class="t" style="left:328.30px;top:195px;font-size:10px;font-weight:bold;color:#000;letter-spacing:-0.3px;width:61px;overflow:hidden;padding-top:4px;margin-top:-4px">GM</div>
<div class="t" style="left:390.80px;top:195px;font-size:10px;font-weight:bold;color:#000;letter-spacing:-0.3px;width:61px;overflow:hidden;padding-top:4px;margin-top:-4px">GMB</div>
<div class="t" style="left:453.80px;top:195px;font-size:10px;font-weight:bold;color:#000;letter-spacing:-0.3px;width:61px;overflow:hidden;padding-top:4px;margin-top:-4px">220</div>
<div class="t" style="left:516.80px;top:195px;font-size:10px;font-weight:bold;color:#000;letter-spacing:-0.3px;width:61px;overflow:hidden;padding-top:4px;margin-top:-4px">GAMBIA</div>
<div class="t" style="left:12.80px;top:212px;font-size:10px;font-weight:bold;color:#000;letter-spacing:-0.3px;width:61px;overflow:hidden;padding-top:4px;margin-top:-4px">GN</div>
<div class="t" style="left:76.30px;top:212px;font-size:10px;font-weight:bold;color:#000;letter-spacing:-0.3px;width:61px;overflow:hidden;padding-top:4px;margin-top:-4px">GN</div>
<div class="t" style="left:139.30px;top:212px;font-size:10px;font-weight:bold;color:#000;letter-spacing:-0.3px;width:61px;overflow:hidden;padding-top:4px;margin-top:-4px">GUINEA</div>
<div class="t" style="left:202.30px;top:212px;font-size:10px;font-weight:bold;color:#000;letter-spacing:-0.3px;width:61px;overflow:hidden;padding-top:4px;margin-top:-4px">324</div>
<div class="t" style="left:265.30px;top:212px;font-size:10px;font-weight:bold;color:#000;letter-spacing:-0.3px;width:61px;overflow:hidden;padding-top:4px;margin-top:-4px">WW</div>
<div class="t" style="left:328.30px;top:212px;font-size:10px;font-weight:bold;color:#000;letter-spacing:-0.3px;width:61px;overflow:hidden;padding-top:4px;margin-top:-4px">GN</div>
<div class="t" style="left:390.80px;top:212px;font-size:10px;font-weight:bold;color:#000;letter-spacing:-0.3px;width:61px;overflow:hidden;padding-top:4px;margin-top:-4px">GIN</div>
<div class="t" style="left:453.80px;top:212px;font-size:10px;font-weight:bold;color:#000;letter-spacing:-0.3px;width:61px;overflow:hidden;padding-top:4px;margin-top:-4px">224</div>
<div class="t" style="left:516.80px;top:212px;font-size:10px;font-weight:bold;color:#000;letter-spacing:-0.3px;width:61px;overflow:hidden;padding-top:4px;margin-top:-4px">GUINEA</div>
<div class="t" style="left:12.80px;top:229px;font-size:10px;font-weight:bold;color:#000;letter-spacing:-0.3px;width:61px;overflow:hidden;padding-top:4px;margin-top:-4px">GP</div>
<div class="t" style="left:76.30px;top:229px;font-size:10px;font-weight:bold;color:#000;letter-spacing:-0.3px;width:61px;overflow:hidden;padding-top:4px;margin-top:-4px">GP</div>
<div class="t" style="left:139.30px;top:229px;font-size:10px;font-weight:bold;color:#000;letter-spacing:-0.3px;width:61px;overflow:hidden;padding-top:4px;margin-top:-4px">GUADELOUPE</div>
<div class="t" style="left:202.30px;top:229px;font-size:10px;font-weight:bold;color:#000;letter-spacing:-0.3px;width:61px;overflow:hidden;padding-top:4px;margin-top:-4px">312</div>
<div class="t" style="left:265.30px;top:229px;font-size:10px;font-weight:bold;color:#000;letter-spacing:-0.3px;width:61px;overflow:hidden;padding-top:4px;margin-top:-4px">WW</div>
<div class="t" style="left:328.30px;top:229px;font-size:10px;font-weight:bold;color:#000;letter-spacing:-0.3px;width:61px;overflow:hidden;padding-top:4px;margin-top:-4px">GP</div>
<div class="t" style="left:390.80px;top:229px;font-size:10px;font-weight:bold;color:#000;letter-spacing:-0.3px;width:61px;overflow:hidden;padding-top:4px;margin-top:-4px">GLP</div>
<div class="t" style="left:453.80px;top:229px;font-size:10px;font-weight:bold;color:#000;letter-spacing:-0.3px;width:61px;overflow:hidden;padding-top:4px;margin-top:-4px">590</div>
<div class="t" style="left:516.80px;top:229px;font-size:10px;font-weight:bold;color:#000;letter-spacing:-0.3px;width:61px;overflow:hidden;padding-top:4px;margin-top:-4px">GUADELOUPE</div>
</div>
<div class="b" style="left:843.50px;top:184.00px;width:15.50px;height:242.00px;background:#F0F0F0"></div>
<div class="b" style="left:843.00px;top:184.00px;width:1.00px;height:16.00px;background:#C8C8C8"></div>
<svg class="b" style="left:845.5px;top:187px" width="11" height="11" viewBox="0 0 11 11"><path d="M2.3 7.5 L5.8 4 L9.3 7.5" stroke="#404040" stroke-width="1.3" fill="none"/></svg>
<svg class="b" style="left:845.5px;top:412px" width="11" height="11" viewBox="0 0 11 11"><path d="M2.3 4 L5.8 7.5 L9.3 4" stroke="#404040" stroke-width="1.3" fill="none"/></svg>
<div class="b" style="left:845.50px;top:298.00px;width:13.00px;height:15.00px;background:#CDCDCD"></div>
<div class="b" style="left:288.00px;top:427.00px;width:555.50px;height:15.00px;background:#F0F0F0"></div>
<svg class="b" style="left:290.5px;top:428.5px" width="11" height="11" viewBox="0 0 11 11"><path d="M7 2.5 L3.5 5.5 L7 8.5" stroke="#404040" stroke-width="1.5" fill="none"/></svg>
<svg class="b" style="left:829.5px;top:428.5px" width="11" height="11" viewBox="0 0 11 11"><path d="M4 2.5 L7.5 5.5 L4 8.5" stroke="#404040" stroke-width="1.5" fill="none"/></svg>
<div class="b" style="left:303.00px;top:427.50px;width:15.00px;height:13.00px;background:#CDCDCD"></div>
<div class="t" style="left:286.30px;top:452px;font-size:10px;font-weight:bold;color:#000;letter-spacing:-0.35px;">LAND_ID</div>
<div class="b" style="left:286.00px;top:466.00px;width:47.00px;height:19.00px;background:#fff;border-top:1px solid #8A8A8A;border-left:1px solid #8A8A8A;border-right:1px solid #fff;border-bottom:1px solid #fff;box-sizing:border-box"></div>
<div class="b" style="left:287.00px;top:467.00px;width:45.00px;height:17.00px;border-top:1px solid #5E5E5E;border-left:1px solid #5E5E5E;border-right:1px solid #E3E3E3;border-bottom:1px solid #E3E3E3;box-sizing:border-box"></div>
<div class="t" style="left:288.50px;top:471px;font-size:10px;font-weight:bold;color:#000;letter-spacing:-0.35px;">GB</div>
<div class="t" style="left:362.70px;top:452px;font-size:10px;font-weight:bold;color:#000;letter-spacing:-0.35px;">ISO2_ALPHA</div>
<div class="b" style="left:363.00px;top:466.00px;width:77.00px;height:19.00px;background:#fff;border-top:1px solid #8A8A8A;border-left:1px solid #8A8A8A;border-right:1px solid #fff;border-bottom:1px solid #fff;box-sizing:border-box"></div>
<div class="b" style="left:364.00px;top:467.00px;width:75.00px;height:17.00px;border-top:1px solid #5E5E5E;border-left:1px solid #5E5E5E;border-right:1px solid #E3E3E3;border-bottom:1px solid #E3E3E3;box-sizing:border-box"></div>
<div class="t" style="left:365.50px;top:471px;font-size:10px;font-weight:bold;color:#000;letter-spacing:-0.35px;">GB</div>
<div class="t" style="left:470.40px;top:452px;font-size:10px;font-weight:bold;color:#000;letter-spacing:-0.35px;">KFZ_LKZ</div>
<div class="b" style="left:470.00px;top:466.00px;width:62.00px;height:19.00px;background:#fff;border-top:1px solid #8A8A8A;border-left:1px solid #8A8A8A;border-right:1px solid #fff;border-bottom:1px solid #fff;box-sizing:border-box"></div>
<div class="b" style="left:471.00px;top:467.00px;width:60.00px;height:17.00px;border-top:1px solid #5E5E5E;border-left:1px solid #5E5E5E;border-right:1px solid #E3E3E3;border-bottom:1px solid #E3E3E3;box-sizing:border-box"></div>
<div class="t" style="left:472.50px;top:471px;font-size:10px;font-weight:bold;color:#000;letter-spacing:-0.35px;">GB</div>
<div class="t" style="left:569.80px;top:452px;font-size:10px;font-weight:bold;color:#000;letter-spacing:-0.35px;">ADRESSFORMAT</div>
<div class="b" style="left:570.00px;top:466.00px;width:31.00px;height:19.00px;background:#fff;border-top:1px solid #8A8A8A;border-left:1px solid #8A8A8A;border-right:1px solid #fff;border-bottom:1px solid #fff;box-sizing:border-box"></div>
<div class="b" style="left:571.00px;top:467.00px;width:29.00px;height:17.00px;border-top:1px solid #5E5E5E;border-left:1px solid #5E5E5E;border-right:1px solid #E3E3E3;border-bottom:1px solid #E3E3E3;box-sizing:border-box"></div>
<div class="t" style="left:572.50px;top:471px;font-size:10px;font-weight:bold;color:#000;letter-spacing:-0.35px;">2</div>
<div class="t" style="left:685.10px;top:452px;font-size:10px;font-weight:bold;color:#000;letter-spacing:-0.35px;">LANDBEZEICHNUNGDEUTSCH</div>
<div class="b" style="left:685.00px;top:466.00px;width:175.00px;height:19.00px;background:#fff;border-top:1px solid #8A8A8A;border-left:1px solid #8A8A8A;border-right:1px solid #fff;border-bottom:1px solid #fff;box-sizing:border-box"></div>
<div class="b" style="left:686.00px;top:467.00px;width:173.00px;height:17.00px;border-top:1px solid #5E5E5E;border-left:1px solid #5E5E5E;border-right:1px solid #E3E3E3;border-bottom:1px solid #E3E3E3;box-sizing:border-box"></div>
<div class="t" style="left:687.50px;top:471px;font-size:10px;font-weight:bold;color:#000;letter-spacing:-0.35px;">GROSSBRITANNIEN</div>
<div class="t" style="left:362.70px;top:498px;font-size:10px;font-weight:bold;color:#000;letter-spacing:-0.35px;">ISO3_ALPHA</div>
<div class="b" style="left:363.00px;top:511.00px;width:77.00px;height:19.00px;background:#fff;border-top:1px solid #8A8A8A;border-left:1px solid #8A8A8A;border-right:1px solid #fff;border-bottom:1px solid #fff;box-sizing:border-box"></div>
<div class="b" style="left:364.00px;top:512.00px;width:75.00px;height:17.00px;border-top:1px solid #5E5E5E;border-left:1px solid #5E5E5E;border-right:1px solid #E3E3E3;border-bottom:1px solid #E3E3E3;box-sizing:border-box"></div>
<div class="t" style="left:365.50px;top:516px;font-size:10px;font-weight:bold;color:#000;letter-spacing:-0.35px;">GBR</div>
<div class="t" style="left:470.40px;top:498px;font-size:10px;font-weight:bold;color:#000;letter-spacing:-0.35px;">TEL_VORWAHL</div>
<div class="b" style="left:470.00px;top:511.00px;width:62.00px;height:19.00px;background:#fff;border-top:1px solid #8A8A8A;border-left:1px solid #8A8A8A;border-right:1px solid #fff;border-bottom:1px solid #fff;box-sizing:border-box"></div>
<div class="b" style="left:471.00px;top:512.00px;width:60.00px;height:17.00px;border-top:1px solid #5E5E5E;border-left:1px solid #5E5E5E;border-right:1px solid #E3E3E3;border-bottom:1px solid #E3E3E3;box-sizing:border-box"></div>
<div class="t" style="left:472.50px;top:516px;font-size:10px;font-weight:bold;color:#000;letter-spacing:-0.35px;">44</div>
<div class="t" style="left:685.10px;top:498px;font-size:10px;font-weight:bold;color:#000;letter-spacing:-0.35px;">LANDBEZEICHNUNGENGLISCH</div>
<div class="b" style="left:685.00px;top:511.00px;width:175.00px;height:19.00px;background:#fff;border-top:1px solid #8A8A8A;border-left:1px solid #8A8A8A;border-right:1px solid #fff;border-bottom:1px solid #fff;box-sizing:border-box"></div>
<div class="b" style="left:686.00px;top:512.00px;width:173.00px;height:17.00px;border-top:1px solid #5E5E5E;border-left:1px solid #5E5E5E;border-right:1px solid #E3E3E3;border-bottom:1px solid #E3E3E3;box-sizing:border-box"></div>
<div class="t" style="left:687.50px;top:516px;font-size:10px;font-weight:bold;color:#000;letter-spacing:-0.35px;">UNITED KINGDOM</div>
<div class="t" style="left:362.70px;top:545px;font-size:10px;font-weight:bold;color:#000;letter-spacing:-0.35px;">ISO3_NUM</div>
<div class="b" style="left:363.00px;top:558.00px;width:77.00px;height:19.00px;background:#fff;border-top:1px solid #8A8A8A;border-left:1px solid #8A8A8A;border-right:1px solid #fff;border-bottom:1px solid #fff;box-sizing:border-box"></div>
<div class="b" style="left:364.00px;top:559.00px;width:75.00px;height:17.00px;border-top:1px solid #5E5E5E;border-left:1px solid #5E5E5E;border-right:1px solid #E3E3E3;border-bottom:1px solid #E3E3E3;box-sizing:border-box"></div>
<div class="t" style="left:365.50px;top:563px;font-size:10px;font-weight:bold;color:#000;letter-spacing:-0.35px;">826</div>
<div class="t" style="left:470.40px;top:545px;font-size:10px;font-weight:bold;color:#000;letter-spacing:-0.35px;">WAEHRUNG</div>
<div class="b" style="left:470.00px;top:558.00px;width:62.00px;height:19.00px;background:#fff;border-top:1px solid #8A8A8A;border-left:1px solid #8A8A8A;border-right:1px solid #fff;border-bottom:1px solid #fff;box-sizing:border-box"></div>
<div class="b" style="left:471.00px;top:559.00px;width:60.00px;height:17.00px;border-top:1px solid #5E5E5E;border-left:1px solid #5E5E5E;border-right:1px solid #E3E3E3;border-bottom:1px solid #E3E3E3;box-sizing:border-box"></div>
<div class="t" style="left:472.50px;top:563px;font-size:10px;font-weight:bold;color:#000;letter-spacing:-0.35px;">GBP</div>
<div class="t" style="left:685.10px;top:545px;font-size:10px;font-weight:bold;color:#000;letter-spacing:-0.35px;">LGROUP</div>
<div class="b" style="left:685.00px;top:558.00px;width:61.00px;height:19.00px;background:#fff;border-top:1px solid #8A8A8A;border-left:1px solid #8A8A8A;border-right:1px solid #fff;border-bottom:1px solid #fff;box-sizing:border-box"></div>
<div class="b" style="left:686.00px;top:559.00px;width:59.00px;height:17.00px;border-top:1px solid #5E5E5E;border-left:1px solid #5E5E5E;border-right:1px solid #E3E3E3;border-bottom:1px solid #E3E3E3;box-sizing:border-box"></div>
<div class="t" style="left:687.50px;top:563px;font-size:10px;font-weight:bold;color:#000;letter-spacing:-0.35px;">WW</div>
<div class="t" style="left:776.80px;top:545px;font-size:10px;font-weight:bold;color:#000;letter-spacing:-0.35px;">CHARSET</div>
<div class="b" style="left:777.00px;top:558.00px;width:61.00px;height:19.00px;background:#fff;border-top:1px solid #8A8A8A;border-left:1px solid #8A8A8A;border-right:1px solid #fff;border-bottom:1px solid #fff;box-sizing:border-box"></div>
<div class="b" style="left:778.00px;top:559.00px;width:59.00px;height:17.00px;border-top:1px solid #5E5E5E;border-left:1px solid #5E5E5E;border-right:1px solid #E3E3E3;border-bottom:1px solid #E3E3E3;box-sizing:border-box"></div>
<div class="t" style="left:779.50px;top:563px;font-size:10px;font-weight:bold;color:#000;letter-spacing:-0.35px;">E1</div>
<div class="t" style="left:685.10px;top:590px;font-size:10px;font-weight:bold;color:#3C3C3C;letter-spacing:-0.35px;">SPRACHE</div>
<div class="b" style="left:685.00px;top:604.00px;width:61.00px;height:18.00px;background:#fff;border-top:1px solid #8A8A8A;border-left:1px solid #8A8A8A;border-right:1px solid #fff;border-bottom:1px solid #fff;box-sizing:border-box"></div>
<div class="b" style="left:686.00px;top:605.00px;width:59.00px;height:16.00px;border-top:1px solid #5E5E5E;border-left:1px solid #5E5E5E;border-right:1px solid #E3E3E3;border-bottom:1px solid #E3E3E3;box-sizing:border-box"></div>
<div class="b" style="left:470.00px;top:588.60px;width:13.00px;height:13.00px;background:#fff;border-top:1px solid #A0A0A0;border-left:1px solid #A0A0A0;border-right:1px solid #fff;border-bottom:1px solid #fff;box-sizing:border-box"></div>
<div class="b" style="left:471.00px;top:589.60px;width:11.00px;height:11.00px;border-top:1px solid #696969;border-left:1px solid #696969;border-right:1px solid #E3E3E3;border-bottom:1px solid #E3E3E3;box-sizing:border-box"></div>
<svg class="b" style="left:470px;top:588.6px" width="13" height="13" viewBox="0 0 13 13"><path d="M3.2 6.3 L5.5 9.6 L10 4.3" stroke="#000" stroke-width="2" fill="none"/></svg>
<div class="t" style="left:487.30px;top:591px;font-size:10.5px;font-weight:bold;color:#000;letter-spacing:0.1px;">PLZFormatPruefen</div>
<div class="b" style="left:470.00px;top:611.00px;width:13.00px;height:13.00px;background:#fff;border-top:1px solid #A0A0A0;border-left:1px solid #A0A0A0;border-right:1px solid #fff;border-bottom:1px solid #fff;box-sizing:border-box"></div>
<div class="b" style="left:471.00px;top:612.00px;width:11.00px;height:11.00px;border-top:1px solid #696969;border-left:1px solid #696969;border-right:1px solid #E3E3E3;border-bottom:1px solid #E3E3E3;box-sizing:border-box"></div>
<svg class="b" style="left:470px;top:611px" width="13" height="13" viewBox="0 0 13 13"><path d="M3.2 6.3 L5.5 9.6 L10 4.3" stroke="#000" stroke-width="2" fill="none"/></svg>
<div class="t" style="left:487.30px;top:613px;font-size:10.5px;font-weight:bold;color:#000;letter-spacing:0.1px;">AusnahmeGebiete Pruefen</div>
<div class="b" style="left:6.3px;top:340.2px;width:202.7px;height:31.400000000000034px;border:4px solid #1FA64B;box-sizing:border-box;box-shadow:2px 2px 3px rgba(0,0,0,0.35), inset 2px 2px 3px rgba(0,0,0,0.35)"></div>
<div class="b" style="left:432.1px;top:598.1px;width:219.0px;height:57.69999999999993px;border:4px solid #1FA64B;box-sizing:border-box;box-shadow:2px 2px 3px rgba(0,0,0,0.35), inset 2px 2px 3px rgba(0,0,0,0.35)"></div>
<div class="b" style="left:658.9px;top:534.2px;width:106.0px;height:59.39999999999998px;border:4px solid #1FA64B;box-sizing:border-box;box-shadow:2px 2px 3px rgba(0,0,0,0.35), inset 2px 2px 3px rgba(0,0,0,0.35)"></div>
<div class="b" style="left:0.00px;top:691.00px;width:897.00px;height:1.00px;background:#A0A0A0"></div>
<div class="b" style="left:0.00px;top:692.00px;width:897.00px;height:1.00px;background:#FAFAFA"></div>
<div class="t " style="left:1.70px;top:693.03px;font-size:10.6px;font-weight:normal;color:#000;letter-spacing:0px;">Beenden mit ESC-Taste ( Tastatur ) oder X-Button ( rechts oben im Eck des Formulars )</div>
</body></html>
